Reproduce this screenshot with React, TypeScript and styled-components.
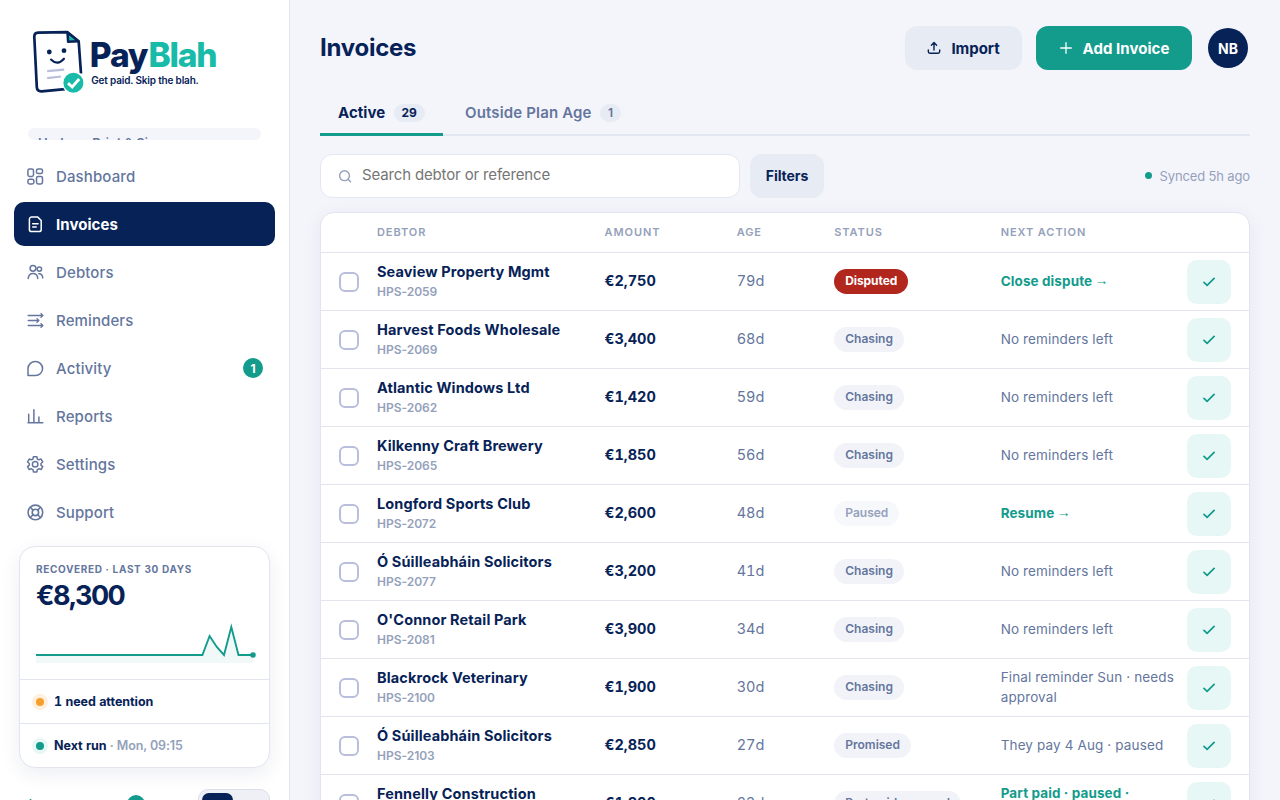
import React from "react";
import styled, { createGlobalStyle, css } from "styled-components";

const GlobalStyle = createGlobalStyle`
  *, *::before, *::after { box-sizing: border-box; }
  html, body { margin: 0; padding: 0; height: 100%; overflow: hidden; }
  body {
    font-family: Inter, "Liberation Sans", sans-serif;
    font-optical-sizing: none;
    background: #f4f5fb;
    color: #062257;
    font-size: 15px;
  }
  button, input { font-family: inherit; }
`;

const navy = "#062257";
const teal = "#139b8c";
const slate = "#64769d";
const muted = "#94a1bb";
const line = "#e2e5f0";

const Shell = styled.div`
  display: flex;
  height: 800px;
  overflow: hidden;
`;

/* Sidebar */
const Sidebar = styled.aside`
  width: 290px;
  flex: none;
  height: 800px;
  overflow: hidden;
  background: #fff;
  border-right: 1px solid ${line};
  display: flex;
  flex-direction: column;
`;
const LogoArea = styled.div`
  flex: none;
  padding: 24px 0 0 28px;
  height: 128px;
  svg { display: block; }
`;
const CompanyClip = styled.div`
  flex: none;
  height: 12px;
  margin: 0 28px;
  overflow: hidden;
  border-radius: 8px;
  background: #f4f5fb;
  padding: 6px 10px;
  font-size: 13px;
  line-height: 18px;
  font-weight: 600;
  letter-spacing: -0.1px;
  color: ${slate};
`;
const Nav = styled.nav`
  flex: none;
  display: flex;
  flex-direction: column;
  gap: 4px;
  padding: 14px 14px 12px;
`;
const NavItem = styled.a<{ $active?: boolean }>`
  display: flex;
  align-items: center;
  gap: 12px;
  height: 44px;
  padding: 0 12px;
  border-radius: 10px;
  font-size: 15px;
  font-weight: 500;
  letter-spacing: 0.12px;
  color: ${slate};
  ${(p) => p.$active && css`
    background: ${navy};
    color: #fff;
    font-weight: 700;
    letter-spacing: 0.05px;
  `}
  svg { flex: none; width: 18px; height: 18px; }
`;
const NavLabel = styled.span`
  flex: 1;
`;
const CountBadge = styled.span`
  width: 20px;
  height: 20px;
  border-radius: 50%;
  background: ${teal};
  color: #fff;
  font-size: 12px;
  font-weight: 700;
  letter-spacing: 0;
  display: flex;
  align-items: center;
  justify-content: center;
`;
const SummaryCard = styled.section`
  flex: none;
  margin: 0 19px 0 19px;
  height: 222px;
  border: 1px solid ${line};
  border-radius: 16px;
  background: #fff;
  box-shadow: 0 6px 20px rgba(6, 34, 87, 0.08);
`;
const Recovered = styled.div`
  height: 132px;
  padding: 16px 0 0 16px;
  svg { display: block; margin-top: 9px; overflow: visible; }
`;
const Eyebrow = styled.div`
  font-size: 10px;
  line-height: 13px;
  font-weight: 700;
  letter-spacing: 0.65px;
  color: ${slate};
`;
const Total = styled.div`
  margin-top: 3px;
  font-size: 27px;
  line-height: 34px;
  font-weight: 750;
  letter-spacing: -1.6px;
`;
const SummaryLine = styled.div`
  display: flex;
  align-items: center;
  height: 44px;
  border-top: 1px solid ${line};
  padding-left: 16px;
  gap: 10px;
  font-size: 12.5px;
  font-weight: 700;
  letter-spacing: -0.03px;
  font-variant-numeric: tabular-nums;
  span {
    color: ${muted};
    font-weight: 600;
    letter-spacing: -0.1px;
    font-variant-numeric: normal;
  }
`;
const HaloDot = styled.i<{ $c: string; $halo: string }>`
  width: 8px;
  height: 8px;
  border-radius: 50%;
  background: ${(p) => p.$c};
  box-shadow: 0 0 0 4px ${(p) => p.$halo};
`;
const SidebarFoot = styled.div`
  flex: none;
  display: flex;
  align-items: flex-start;
  margin-top: 21px;
  padding: 0 19px 0 24px;
  height: 40px;
`;
const FootIcon = styled.div`
  width: 103px;
  padding: 9.5px 0 0 1px;
  svg { display: block; }
`;
const FootBadge = styled.div`
  width: 18px;
  height: 18px;
  margin-top: 6px;
  border-radius: 50%;
  background: ${teal};
`;
const Switcher = styled.div`
  margin-left: auto;
  width: 72px;
  height: 36px;
  padding: 3px;
  border: 1px solid #dcdfea;
  border-radius: 10px;
  background: #eef0f6;
`;
const SwitchThumb = styled.div`
  width: 31px;
  height: 28px;
  border-radius: 7px;
  background: ${navy};
`;

/* Main column */
const Main = styled.main`
  flex: 1;
  min-width: 0;
  padding: 26px 30px 0;
`;
const TopBar = styled.header`
  display: flex;
  align-items: center;
  height: 44px;
  padding-right: 2px;
`;
const Title = styled.h1`
  flex: 1;
  margin: 0;
  font-size: 24px;
  line-height: 30px;
  font-weight: 750;
  letter-spacing: -0.25px;
`;
const Button = styled.button<{ $primary?: boolean; $w: number }>`
  display: flex;
  align-items: center;
  justify-content: center;
  width: ${(p) => p.$w}px;
  height: 44px;
  padding: 0;
  border: 0;
  border-radius: 12px;
  font-size: 15px;
  font-weight: 700;
  letter-spacing: ${(p) => (p.$primary ? "0.05px" : "-0.05px")};
  gap: 10px;
  background: ${(p) => (p.$primary ? teal : "#e7ebf4")};
  color: ${(p) => (p.$primary ? "#fff" : navy)};
`;
const Avatar = styled.div`
  width: 40px;
  height: 40px;
  margin-left: 16px;
  border-radius: 50%;
  background: ${navy};
  color: #fff;
  font-size: 14px;
  font-weight: 700;
  display: flex;
  align-items: center;
  justify-content: center;
`;
const Gap = styled.div`
  width: 14px;
`;
const Tabs = styled.div`
  display: flex;
  gap: 4px;
  height: 46px;
  margin-top: 20px;
  border-bottom: 2px solid #e2e7f2;
`;
const Tab = styled.div<{ $active?: boolean; $w: number }>`
  display: flex;
  align-items: center;
  gap: 8.5px;
  width: ${(p) => p.$w}px;
  height: 46px;
  padding: 2px 0 0 18px;
  font-size: 15px;
  font-weight: ${(p) => (p.$active ? 650 : 600)};
  letter-spacing: ${(p) => (p.$active ? "0.05px" : "0.15px")};
  color: ${(p) => (p.$active ? navy : slate)};
  border-bottom: 3px solid ${(p) => (p.$active ? teal : "transparent")};
`;
const TabCount = styled.span`
  height: 18px;
  line-height: 18px;
  padding: 0 7.8px;
  border-radius: 9px;
  background: #e7ebf4;
  font-size: 12px;
  letter-spacing: 0;
`;
const Toolbar = styled.div`
  display: flex;
  align-items: center;
  height: 44px;
  margin-top: 18px;
`;
const SearchBox = styled.label`
  display: flex;
  align-items: center;
  width: 420px;
  height: 44px;
  padding-left: 17px;
  margin-right: 10px;
  border: 1px solid #e2e7f2;
  border-radius: 12px;
  background: #fff;
  svg { flex: none; }
`;
const SearchInput = styled.input`
  flex: 1;
  height: 40px;
  padding: 0 0 3px 9px;
  border: 0;
  outline: 0;
  background: transparent;
  font-size: 15px;
  letter-spacing: -0.15px;
  &::placeholder { color: #757575; opacity: 1; }
`;
const FilterButton = styled(Button)`
  font-size: 14px;
  padding-bottom: 1px;
`;
const Synced = styled.div`
  margin-left: auto;
  display: flex;
  align-items: center;
  gap: 7.5px;
  padding-bottom: 1px;
  font-size: 13px;
  font-weight: 370;
  letter-spacing: -0.14px;
  color: ${muted};
  i { width: 7px; height: 7px; border-radius: 50%; background: ${teal}; }
`;

/* Table */
const Table = styled.section`
  margin-top: 14px;
  height: 640px;
  border: 1px solid ${line};
  border-radius: 14px;
  background: #fff;
  box-shadow: 0 4px 20px rgba(6, 34, 87, 0.06);
`;
const gridColumns = css`
  display: grid;
  grid-template-columns: 38px 227.5px 132.2px 97.6px 166.4px 186.3px 44px;
  align-items: center;
  padding-left: 18px;
`;
const HeadRow = styled.div`
  ${gridColumns}
  height: 40px;
  padding-bottom: 2px;
  border-bottom: 1px solid ${line};
  font-size: 11px;
  font-weight: 600;
  letter-spacing: 0.93px;
  color: ${muted};
`;
const Row = styled.div`
  ${gridColumns}
  height: 58px;
  border-bottom: 1px solid ${line};
`;
const Checkbox = styled.span`
  width: 20px;
  height: 20px;
  margin-top: 1px;
  border: 2px solid #b8bedb;
  border-radius: 6px;
`;
const Debtor = styled.div`
  margin-top: -2px;
`;
const DebtorName = styled.div`
  font-size: 14.5px;
  line-height: 20px;
  font-weight: 650;
  letter-spacing: 0.12px;
`;
const Reference = styled.div`
  font-size: 12px;
  line-height: 16px;
  margin-top: 2px;
  font-weight: 600;
  letter-spacing: -0.02px;
  color: ${muted};
`;
const Amount = styled.div`
  margin-top: -2px;
  font-size: 14.5px;
  font-weight: 700;
  font-variant-numeric: tabular-nums;
`;
const Age = styled.div`
  margin-top: -2px;
  font-size: 14.5px;
  font-weight: 370;
  color: ${slate};
  font-variant-numeric: tabular-nums;
`;
type Tone = "danger" | "normal" | "faded";
const Status = styled.span<{ $tone: Tone }>`
  justify-self: start;
  margin-left: -0.5px;
  height: 25px;
  line-height: 24px;
  padding: 0 11px 0 11.5px;
  border-radius: 13px;
  font-size: 12px;
  font-weight: ${(p) => (p.$tone === "danger" ? 700 : 600)};
  letter-spacing: ${(p) => (p.$tone === "danger" ? "-0.1px" : "0")};
  white-space: nowrap;
  background: ${(p) => (p.$tone === "danger" ? "#b1261d" : p.$tone === "faded" ? "#f7f8fb" : "#f2f3f8")};
  color: ${(p) => (p.$tone === "danger" ? "#fff" : p.$tone === "faded" ? muted : slate)};
`;
const NextAction = styled.div<{ $link?: boolean }>`
  margin-top: -2px;
  font-size: 13.5px;
  line-height: 20px;
  padding-right: 10px;
  color: ${(p) => (p.$link ? teal : slate)};
  font-weight: ${(p) => (p.$link ? 700 : 380)};
  letter-spacing: ${(p) => (p.$link ? "0.1px" : "0.13px")};
`;
const Arrow = styled.span`
  font-family: "Liberation Sans", sans-serif;
  font-weight: 400;
  font-size: 14px;
  line-height: 0;
  vertical-align: 1px;
  margin-left: -1px;
`;
const DoneButton = styled.button`
  width: 44px;
  height: 44px;
  margin-top: 1px;
  padding: 0 0.5px 0 0;
  border: 0;
  border-radius: 10px;
  background: #e7f7f6;
  display: flex;
  align-items: center;
  justify-content: center;
`;

const Stroke = ({ children, w = 1.5 }: { children: React.ReactNode; w?: number }) => (
  <svg width="18" height="18" viewBox="0 0 18 18" fill="none" stroke="currentColor" strokeWidth={w} strokeLinecap="round" strokeLinejoin="round">
    {children}
  </svg>
);

const icons = {
  Dashboard: (
    <Stroke>
      <rect x="1.9" y="2" width="5.6" height="7.5" rx="1.7" />
      <rect x="10.5" y="2" width="6" height="4.6" rx="1.7" />
      <rect x="1.9" y="12.3" width="6" height="4.6" rx="1.7" />
      <rect x="10.5" y="9.5" width="6" height="7.4" rx="1.7" />
    </Stroke>
  ),
  Invoices: (
    <Stroke>
      <path d="M5.600 2.100h6.200l3.400 3.400v8.900a2.200 2.200 0 0 1-2.200 2.200H5.600a2.200 2.200 0 0 1-2.200-2.200V4.300a2.200 2.200 0 0 1 2.200-2.200z" />
      <path d="M6.700 8.800h5.400M6.700 12h3.500" />
    </Stroke>
  ),
  Debtors: (
    <Stroke>
      <circle cx="7" cy="5.300" r="2.900" />
      <circle cx="13.400" cy="6.100" r="2.200" />
      <path d="M2.200 15.400c.3-3.400 2-5 4.800-5s4.500 1.600 4.800 5M12.800 10.700c2.300-.2 3.700 1.400 4 4.200" />
    </Stroke>
  ),
  Reminders: (
    <Stroke w={1.4}>
      <path d="M2.200 4.500h14.400M2.200 9.500H12M2.200 14.500h14.400" />
      <path d="M15 2.700l1.800 1.800L15 6.300M11 7.700l1.800 1.800L11 11.300M15 12.700l1.800 1.800L15 16.300" />
    </Stroke>
  ),
  Activity: (
    <Stroke>
      <path d="M2 16.500V9.600A7.200 7 0 0 1 9.300 2.600a7.200 7 0 0 1 7.300 7A7.100 6.900 0 0 1 9.500 16.500z" />
    </Stroke>
  ),
  Reports: (
    <Stroke>
      <path d="M2 15.800h14.800M2.700 15V7.300M7.900 15V2.800M12.900 15V9.900" />
    </Stroke>
  ),
  Settings: (
    <svg viewBox="0 0 24 24" fill="none" stroke="currentColor" strokeWidth="2" strokeLinejoin="round">
      <circle cx="12.200" cy="12.400" r="3.700" />
      <path d="M9.900 2.200h4.600l.6 3.100 2 1.100 3-1 2.200 3.900-2.300 2v2.200l2.300 2-2.200 3.900-3-1-2 1.100-.6 3.100H9.900l-.6-3.100-2-1.100-3 1-2.200-3.900 2.300-2v-2.200l-2.300-2 2.200-3.900 3 1 2-1.100z" />
    </svg>
  ),
  Support: (
    <Stroke w={1.6}>
      <circle cx="9.400" cy="9.400" r="7.300" />
      <circle cx="9.400" cy="9.400" r="3.200" />
      <path d="M4.300 4.300l2.800 2.800M14.500 4.300l-2.800 2.800M4.300 14.500l2.800-2.800M14.500 14.500l-2.800-2.800" />
    </Stroke>
  ),
};

const Logo = () => (
  <svg width="200" height="80" viewBox="28 24 200 80" fontFamily="Inter, sans-serif">
    <path d="M67.500 32.200L38 32.600q-4 .3-3.800 4.200L36.800 87q.3 4.500 4.800 4.200L65 89.200 81 73 78.700 41.500z" fill="#fff" />
    <path d="M65 89.100L41.600 91.300q-4.500.2-4.800-4.200L34.300 36.800q-.1-3.900 3.800-4.200L67.500 32.200 78.700 41.500 81 73.500" fill="none" stroke={navy} strokeWidth="2.700" strokeLinejoin="round" />
    <path d="M67.500 32.500l.6 9.200 10.500-.4z" fill="#18baa8" stroke={navy} strokeWidth="2.500" strokeLinejoin="round" />
    <circle cx="49.300" cy="52" r="2.400" fill={navy} />
    <circle cx="64" cy="50.700" r="2.400" fill={navy} />
    <path d="M51 59.500q6.500 6.700 13-.8" fill="none" stroke={navy} strokeWidth="2.100" strokeLinecap="round" />
    <path d="M47.200 71.200l17-1.600M47.200 78.200l13.700-1.700" stroke="#b8bedb" strokeWidth="2.200" />
    <circle cx="73.400" cy="82.800" r="11.300" fill="#fff" />
    <circle cx="73.400" cy="82.800" r="10" fill="#18baa8" />
    <path d="M68 83.100l4.200 3.900 7-8" fill="none" stroke="#fff" strokeWidth="2.800" />
    <text x="89.800" y="66.600" fontSize="33.500" fontWeight="800" fill={navy} letterSpacing="-1.150">Pay</text>
    <text x="148.600" y="66.600" fontSize="33.500" fontWeight="800" fill="#18baa8" textLength="69">Blah</text>
    <text x="91.300" y="83.600" fontSize="10" fontWeight="600" fill={navy} textLength="107.500">Get paid. Skip the blah.</text>
  </svg>
);

const rows: { name: string; id: string; amount: string; age: string; status: string; tone?: Tone; next: string; link?: boolean }[] = [
  { name: "Seaview Property Mgmt", id: "HPS-2059", amount: "€2,750", age: "79d", status: "Disputed", tone: "danger", next: "Close dispute", link: true },
  { name: "Harvest Foods Wholesale", id: "HPS-2069", amount: "€3,400", age: "68d", status: "Chasing", next: "No reminders left" },
  { name: "Atlantic Windows Ltd", id: "HPS-2062", amount: "€1,420", age: "59d", status: "Chasing", next: "No reminders left" },
  { name: "Kilkenny Craft Brewery", id: "HPS-2065", amount: "€1,850", age: "56d", status: "Chasing", next: "No reminders left" },
  { name: "Longford Sports Club", id: "HPS-2072", amount: "€2,600", age: "48d", status: "Paused", tone: "faded", next: "Resume", link: true },
  { name: "Ó Súilleabháin Solicitors", id: "HPS-2077", amount: "€3,200", age: "41d", status: "Chasing", next: "No reminders left" },
  { name: "O'Connor Retail Park", id: "HPS-2081", amount: "€3,900", age: "34d", status: "Chasing", next: "No reminders left" },
  { name: "Blackrock Veterinary", id: "HPS-2100", amount: "€1,900", age: "30d", status: "Chasing", next: "Final reminder Sun · needs approval" },
  { name: "Ó Súilleabháin Solicitors", id: "HPS-2103", amount: "€2,850", age: "27d", status: "Promised", next: "They pay 4 Aug · paused" },
  { name: "Fennelly Construction", id: "HPS-2106", amount: "€1,800", age: "23d", status: "Part paid · paused", next: "Part paid · paused · Resume", link: true },
];

export default function App() {
  return (
    <Shell>
      <GlobalStyle />
      <Sidebar>
        <LogoArea><Logo /></LogoArea>
        <CompanyClip>Harbour Print &amp; Signs</CompanyClip>
        <Nav>
          {Object.entries(icons).map(([label, icon]) => (
            <NavItem key={label} $active={label === "Invoices"}>
              {icon}
              <NavLabel>{label}</NavLabel>
              {label === "Activity" && <CountBadge>1</CountBadge>}
            </NavItem>
          ))}
        </Nav>
        <SummaryCard>
          <Recovered>
            <Eyebrow>RECOVERED · LAST 30 DAYS</Eyebrow>
            <Total>€8,300</Total>
            <svg width="220" height="41" viewBox="0 0 220 41" fill="none">
              <path d="M0 33H166.400L173.600 14 180.800 25 188 33 195.300 5 202.500 33H217V41H0z" fill={teal} fillOpacity="0.06" />
              <path d="M0 33H166.400L173.600 14 180.800 25 188 33 195.300 5 202.500 33H217" stroke={teal} strokeWidth="1.900" />
              <circle cx="217" cy="33" r="2.800" fill={teal} />
            </svg>
          </Recovered>
          <SummaryLine><HaloDot $c="#f5a02b" $halo="#fdf0df" />1 need attention</SummaryLine>
          <SummaryLine><HaloDot $c={teal} $halo="#e7f7f6" /><div>Next run <span>· Mon, 09:15</span></div></SummaryLine>
        </SummaryCard>
        <SidebarFoot>
          <FootIcon>
            <svg width="12" height="12" viewBox="0 0 12 12" stroke={teal} strokeWidth="1.600"><path d="M5.500 0v11M0 5.500h11" /></svg>
          </FootIcon>
          <FootBadge />
          <Switcher><SwitchThumb /></Switcher>
        </SidebarFoot>
      </Sidebar>
      <Main>
        <TopBar>
          <Title>Invoices</Title>
          <Button $w={117}>
            <svg width="14" height="14" viewBox="0 0 14 14" fill="none" stroke="currentColor" strokeWidth="1.400" strokeLinecap="round" strokeLinejoin="round">
              <path d="M7 9V1.800M4.400 4.200L7 1.600l2.600 2.600M1.300 9v1.500a1.700 1.700 0 0 0 1.700 1.700h8a1.700 1.700 0 0 0 1.700-1.700V9" />
            </svg>
            Import
          </Button>
          <Gap />
          <Button $primary $w={156}>
            <svg width="14" height="14" viewBox="0 0 14 14" stroke="currentColor" strokeWidth="1.300" strokeLinecap="round"><path d="M7 1.700v10.600M1.700 7h10.600" /></svg>
            Add Invoice
          </Button>
          <Avatar>NB</Avatar>
        </TopBar>
        <Tabs>
          <Tab $active $w={123}>Active <TabCount>29</TabCount></Tab>
          <Tab $w={180}>Outside Plan Age <TabCount>1</TabCount></Tab>
        </Tabs>
        <Toolbar>
          <SearchBox>
            <svg width="15" height="15" viewBox="0 0 15 15" fill="none" stroke={muted} strokeWidth="1.400" strokeLinecap="round">
              <circle cx="6.500" cy="6.700" r="4.900" />
              <path d="M10.200 10.400l2.400 2.400" />
            </svg>
            <SearchInput placeholder="Search debtor or reference" />
          </SearchBox>
          <FilterButton $w={74}>Filters</FilterButton>
          <Synced><i />Synced 5h ago</Synced>
        </Toolbar>
        <Table>
          <HeadRow>
            <span />
            <span>DEBTOR</span>
            <span>AMOUNT</span>
            <span>AGE</span>
            <span>STATUS</span>
            <span>NEXT ACTION</span>
          </HeadRow>
          {rows.map((r) => (
            <Row key={r.id}>
              <Checkbox />
              <Debtor>
                <DebtorName>{r.name}</DebtorName>
                <Reference>{r.id}</Reference>
              </Debtor>
              <Amount>{r.amount}</Amount>
              <Age>{r.age}</Age>
              <Status $tone={r.tone ?? "normal"}>{r.status}</Status>
              <NextAction $link={r.link}>{r.next}{r.link && <> <Arrow>→</Arrow></>}</NextAction>
              <DoneButton aria-label="Mark as paid">
                <svg width="12" height="10" viewBox="0 0 12 10" fill="none" stroke={teal} strokeWidth="1.700" strokeLinecap="round" strokeLinejoin="round"><path d="M1 5.400l3.100 3 7-7" /></svg>
              </DoneButton>
            </Row>
          ))}
        </Table>
      </Main>
    </Shell>
  );
}
